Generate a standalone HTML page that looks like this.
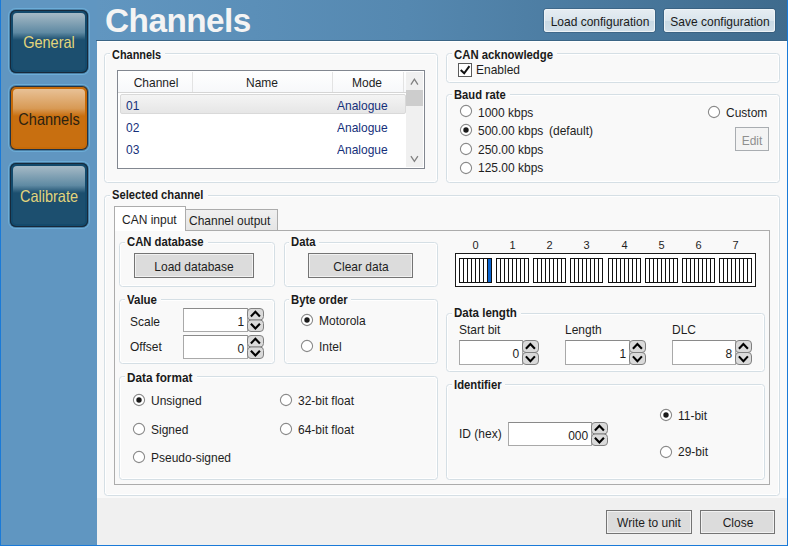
<!DOCTYPE html>
<html><head><meta charset="utf-8"><style>
html,body{margin:0;padding:0;}
body{width:788px;height:546px;position:relative;overflow:hidden;font-family:"Liberation Sans",sans-serif;}
body>div,body div{position:absolute;}
.t{white-space:nowrap;line-height:1;}
</style></head><body>
<div style="left:0px;top:0px;width:788px;height:546px;background:#6096c1"></div>
<div style="left:97px;top:0px;width:690px;height:41px;background:linear-gradient(90deg,#6196c0 0%,#5588b0 45%,#3f6b8d 100%)"></div>
<div style="left:96px;top:40px;width:691px;height:1px;background:#3b6585"></div>
<div style="left:97px;top:41px;width:690px;height:457px;background:#f9f9f9"></div>
<div style="left:97px;top:41px;width:690px;height:1px;background:#ffffff"></div>
<div style="left:97px;top:498px;width:690px;height:47px;background:#f0f0f0"></div>
<div style="left:0px;top:0px;width:1px;height:546px;background:#1a7ad8"></div>
<div style="left:787px;top:0px;width:1px;height:546px;background:#1a7ad8"></div>
<div style="left:0px;top:545px;width:788px;height:1px;background:#1a7ad8"></div>
<div style="left:8px;top:8px;width:82px;height:67px;border-radius:8px;background:#6cadd8"></div>
<div style="left:9px;top:9px;width:80px;height:65px;border-radius:7px;background:#4a7ea3"></div>
<div style="left:10px;top:10px;width:78px;height:63px;border-radius:6px;background:#1c4f6f;box-shadow:inset 0 0 0 1px #17293a, inset 0 0 0 3px #134a6c"></div>
<div style="left:13px;top:13px;width:72px;height:27px;border-radius:4px 4px 0 0;background:linear-gradient(180deg,#a6bac6 0%,#5f8aa3 72%,#1c4f6f 100%)"></div>
<div class="t" style="left:49.2px;width:0;display:flex;justify-content:center;top:34.00px;font-size:16.5px;color:#e3d57c;font-weight:400;transform:scaleX(0.88);transform-origin:center top;">General</div>
<div style="left:8px;top:84px;width:82px;height:68px;border-radius:8px;background:#6cadd8"></div>
<div style="left:9px;top:85px;width:80px;height:66px;border-radius:7px;background:#4a7ea3"></div>
<div style="left:10px;top:86px;width:78px;height:64px;border-radius:6px;background:#c86f10;box-shadow:inset 0 0 0 1px #1f3346, inset 0 0 0 3px #c66a08"></div>
<div style="left:13px;top:89px;width:72px;height:27px;border-radius:4px 4px 0 0;background:linear-gradient(180deg,#e8c196 0%,#d89a55 72%,#c86f10 100%)"></div>
<div class="t" style="left:49.2px;width:0;display:flex;justify-content:center;top:111.00px;font-size:16.5px;color:#2b2210;font-weight:400;transform:scaleX(0.88);transform-origin:center top;">Channels</div>
<div style="left:8px;top:161px;width:82px;height:68px;border-radius:8px;background:#6cadd8"></div>
<div style="left:9px;top:162px;width:80px;height:66px;border-radius:7px;background:#4a7ea3"></div>
<div style="left:10px;top:163px;width:78px;height:64px;border-radius:6px;background:#1c4f6f;box-shadow:inset 0 0 0 1px #17293a, inset 0 0 0 3px #134a6c"></div>
<div style="left:13px;top:166px;width:72px;height:27px;border-radius:4px 4px 0 0;background:linear-gradient(180deg,#a6bac6 0%,#5f8aa3 72%,#1c4f6f 100%)"></div>
<div class="t" style="left:49.2px;width:0;display:flex;justify-content:center;top:188.00px;font-size:16.5px;color:#e3d57c;font-weight:400;transform:scaleX(0.88);transform-origin:center top;">Calibrate</div>
<div class="t" style="left:105px;top:4.00px;font-size:33.3px;color:#f4f4f4;font-weight:700;letter-spacing:-0.5px">Channels</div>
<div style="left:543px;top:8px;width:113px;height:25px;border-radius:4px;background:rgba(40,70,95,0.35)"></div>
<div style="left:544px;top:9px;width:111px;height:23px;border-radius:3px;background:linear-gradient(180deg,#e6edf2 0%,#dae5ed 50%,#c9d9e4 52%,#d3e0e9 100%);box-shadow:inset 0 0 0 1px #eef3f6"></div>
<div class="t" style="left:599.5px;width:0;display:flex;justify-content:center;top:16.00px;font-size:12.7px;color:#1a1a1a;font-weight:400;transform:scaleX(0.945);transform-origin:center top;">Load configuration</div>
<div style="left:663px;top:8px;width:113px;height:25px;border-radius:4px;background:rgba(40,70,95,0.35)"></div>
<div style="left:664px;top:9px;width:111px;height:23px;border-radius:3px;background:linear-gradient(180deg,#e6edf2 0%,#dae5ed 50%,#c9d9e4 52%,#d3e0e9 100%);box-shadow:inset 0 0 0 1px #eef3f6"></div>
<div class="t" style="left:719.5px;width:0;display:flex;justify-content:center;top:16.00px;font-size:12.7px;color:#1a1a1a;font-weight:400;transform:scaleX(0.945);transform-origin:center top;">Save configuration</div>
<div style="left:104px;top:53px;width:334px;height:130px;border-radius:3.5px;border:1px solid #d5dfe5;box-sizing:border-box;box-shadow:inset 0 0 0 1px #ffffff"></div>
<div style="left:110.0px;top:51px;width:55.1491px;height:5px;background:#f9f9f9"></div>
<div class="t" style="left:111.9px;top:49.00px;font-size:12px;color:#1a1a1a;font-weight:700;transform:scaleX(0.91);transform-origin:left top;">Channels</div>
<div style="left:446px;top:53px;width:334px;height:30px;border-radius:3.5px;border:1px solid #d5dfe5;box-sizing:border-box;box-shadow:inset 0 0 0 1px #ffffff"></div>
<div style="left:452.0px;top:51px;width:105.03674px;height:5px;background:#f9f9f9"></div>
<div class="t" style="left:453.9px;top:49.00px;font-size:12px;color:#1a1a1a;font-weight:700;transform:scaleX(0.946);transform-origin:left top;">CAN acknowledge</div>
<div style="left:446px;top:94px;width:334px;height:89px;border-radius:3.5px;border:1px solid #d5dfe5;box-sizing:border-box;box-shadow:inset 0 0 0 1px #ffffff"></div>
<div style="left:452.0px;top:92px;width:57.69690000000001px;height:5px;background:#f9f9f9"></div>
<div class="t" style="left:453.9px;top:89.00px;font-size:12px;color:#1a1a1a;font-weight:700;transform:scaleX(0.934);transform-origin:left top;">Baud rate</div>
<div style="left:104px;top:195px;width:676px;height:301px;border-radius:3.5px;border:1px solid #d5dfe5;box-sizing:border-box;box-shadow:inset 0 0 0 1px #ffffff"></div>
<div style="left:110.2px;top:193px;width:97.37328000000001px;height:5px;background:#f9f9f9"></div>
<div class="t" style="left:112.10000000000001px;top:189.00px;font-size:12px;color:#1a1a1a;font-weight:700;transform:scaleX(0.932);transform-origin:left top;">Selected channel</div>
<div style="left:117px;top:70px;width:308px;height:99px;border:1px solid #828790;box-sizing:border-box;background:#fff"></div>
<div style="left:118px;top:71px;width:288px;height:22px;background:linear-gradient(180deg,#ffffff 0%,#f7f8fa 100%);border-bottom:1px solid #d5d5d5;box-sizing:border-box"></div>
<div style="left:192px;top:72px;width:1px;height:20px;background:#e3e3e3"></div>
<div style="left:332px;top:72px;width:1px;height:20px;background:#e3e3e3"></div>
<div style="left:403px;top:72px;width:1px;height:20px;background:#e3e3e3"></div>
<div class="t" style="left:156px;width:0;display:flex;justify-content:center;top:77.00px;font-size:12.7px;color:#1e1e1e;font-weight:400;transform:scaleX(0.945);transform-origin:center top;">Channel</div>
<div class="t" style="left:262px;width:0;display:flex;justify-content:center;top:77.00px;font-size:12.7px;color:#1e1e1e;font-weight:400;transform:scaleX(0.945);transform-origin:center top;">Name</div>
<div class="t" style="left:367px;width:0;display:flex;justify-content:center;top:77.00px;font-size:12.7px;color:#1e1e1e;font-weight:400;transform:scaleX(0.945);transform-origin:center top;">Mode</div>
<div style="left:120px;top:94px;width:286px;height:20px;border-radius:2px;border:1px solid #d9d9d9;box-sizing:border-box;background:linear-gradient(180deg,#f4f4f4 0%,#e6e6e6 100%)"></div>
<div style="left:118px;top:93px;width:288px;height:75px;overflow:hidden">
<div class="t" style="left:8.3px;top:7.00px;font-size:12.7px;color:#15307a;font-weight:400;transform:scaleX(0.945);transform-origin:left top;">01</div>
<div class="t" style="left:219.3px;top:7.00px;font-size:12.7px;color:#15307a;font-weight:400;transform:scaleX(0.945);transform-origin:left top;">Analogue</div>
<div class="t" style="left:8.3px;top:29.00px;font-size:12.7px;color:#15307a;font-weight:400;transform:scaleX(0.945);transform-origin:left top;">02</div>
<div class="t" style="left:219.3px;top:29.00px;font-size:12.7px;color:#15307a;font-weight:400;transform:scaleX(0.945);transform-origin:left top;">Analogue</div>
<div class="t" style="left:8.3px;top:51.00px;font-size:12.7px;color:#15307a;font-weight:400;transform:scaleX(0.945);transform-origin:left top;">03</div>
<div class="t" style="left:219.3px;top:51.00px;font-size:12.7px;color:#15307a;font-weight:400;transform:scaleX(0.945);transform-origin:left top;">Analogue</div>
<div class="t" style="left:8.3px;top:74.00px;font-size:12.7px;color:#15307a;font-weight:400;transform:scaleX(0.945);transform-origin:left top;">04</div>
<div class="t" style="left:219.3px;top:74.00px;font-size:12.7px;color:#15307a;font-weight:400;transform:scaleX(0.945);transform-origin:left top;">Analogue</div>
</div>
<div style="left:406px;top:72px;width:17px;height:95px;background:#f0f0f0"></div>
<div style="left:406px;top:90px;width:17px;height:16px;background:#cdcdcd"></div>
<svg style="position:absolute;left:406px;top:71px" width="18" height="97"><path d="M4.9 13.6 L8.4 8.2 L11.9 13.6" stroke="#808080" fill="none" stroke-width="1.3"/><path d="M4.9 85.2 L8.4 90.4 L11.9 85.2" stroke="#808080" fill="none" stroke-width="1.3"/></svg>
<div style="left:458px;top:63px;width:14px;height:14px;border:1px solid #5a5a5a;box-sizing:border-box;background:#fff"></div>
<svg style="position:absolute;left:458px;top:63px" width="14" height="14"><path d="M2.7 7 L6.2 10.3 L11.4 3.2" stroke="#111" fill="none" stroke-width="2"/></svg>
<div class="t" style="left:476.3px;top:64.00px;font-size:12.7px;color:#1e1e1e;font-weight:400;transform:scaleX(0.945);transform-origin:left top;">Enabled</div>
<svg style="position:absolute;left:458.10px;top:103.40px" width="16" height="16"><circle cx="8" cy="8" r="5.6" fill="#fff" stroke="#8a8a8a" stroke-width="1.1"/></svg>
<div class="t" style="left:477.8px;top:107.00px;font-size:12.7px;color:#1e1e1e;font-weight:400;transform:scaleX(0.945);transform-origin:left top;">1000 kbps</div>
<svg style="position:absolute;left:458.10px;top:122.30px" width="16" height="16"><circle cx="8" cy="8" r="5.6" fill="#fff" stroke="#8a8a8a" stroke-width="1.1"/><circle cx="8" cy="8" r="2.7" fill="#1a1a1a"/></svg>
<div class="t" style="left:477.8px;top:125.00px;font-size:12.7px;color:#1e1e1e;font-weight:400;transform:scaleX(0.945);transform-origin:left top;">500.00 kbps</div>
<svg style="position:absolute;left:458.10px;top:141.20px" width="16" height="16"><circle cx="8" cy="8" r="5.6" fill="#fff" stroke="#8a8a8a" stroke-width="1.1"/></svg>
<div class="t" style="left:477.8px;top:144.00px;font-size:12.7px;color:#1e1e1e;font-weight:400;transform:scaleX(0.945);transform-origin:left top;">250.00 kbps</div>
<svg style="position:absolute;left:458.10px;top:160.10px" width="16" height="16"><circle cx="8" cy="8" r="5.6" fill="#fff" stroke="#8a8a8a" stroke-width="1.1"/></svg>
<div class="t" style="left:477.8px;top:162.00px;font-size:12.7px;color:#1e1e1e;font-weight:400;transform:scaleX(0.945);transform-origin:left top;">125.00 kbps</div>
<div class="t" style="left:548.9px;top:125.00px;font-size:12.7px;color:#1e1e1e;font-weight:400;transform:scaleX(0.945);transform-origin:left top;">(default)</div>
<svg style="position:absolute;left:705.80px;top:103.60px" width="16" height="16"><circle cx="8" cy="8" r="5.6" fill="#fff" stroke="#8a8a8a" stroke-width="1.1"/></svg>
<div class="t" style="left:725.9px;top:107.00px;font-size:12.7px;color:#1e1e1e;font-weight:400;transform:scaleX(0.945);transform-origin:left top;">Custom</div>
<div style="left:735px;top:127px;width:34px;height:24px;border:1px solid #a9adb1;box-sizing:border-box;background:#f4f4f4"></div>
<div class="t" style="left:752px;width:0;display:flex;justify-content:center;top:135.00px;font-size:12.7px;color:#8f8f8f;font-weight:400;transform:scaleX(0.945);transform-origin:center top;">Edit</div>
<div style="left:114px;top:230px;width:656px;height:255px;border:1px solid #acacac;box-sizing:border-box;background:#f9f9f9"></div>
<div style="left:185px;top:209px;width:93px;height:22px;border:1px solid #acacac;box-sizing:border-box;background:linear-gradient(180deg,#f0f0f0,#e5e5e5)"></div>
<div class="t" style="left:189.3px;top:215.00px;font-size:12.7px;color:#1e1e1e;font-weight:400;transform:scaleX(0.945);transform-origin:left top;">Channel output</div>
<div style="left:114px;top:206px;width:72px;height:25px;border:1px solid #acacac;border-bottom:none;box-sizing:border-box;background:#ffffff"></div>
<div class="t" style="left:121.89999999999999px;top:214.00px;font-size:12.7px;color:#1e1e1e;font-weight:400;transform:scaleX(0.945);transform-origin:left top;">CAN input</div>
<div style="left:119px;top:242px;width:156px;height:45px;border-radius:3.5px;border:1px solid #d5dfe5;box-sizing:border-box;box-shadow:inset 0 0 0 1px #ffffff"></div>
<div style="left:125.2px;top:240px;width:82.55976px;height:5px;background:#f9f9f9"></div>
<div class="t" style="left:127.10000000000001px;top:236.00px;font-size:12px;color:#1a1a1a;font-weight:700;transform:scaleX(0.941);transform-origin:left top;">CAN database</div>
<div style="left:284px;top:242px;width:154px;height:45px;border-radius:3.5px;border:1px solid #d5dfe5;box-sizing:border-box;box-shadow:inset 0 0 0 1px #ffffff"></div>
<div style="left:288.7px;top:240px;width:30.5246px;height:5px;background:#f9f9f9"></div>
<div class="t" style="left:290.59999999999997px;top:236.00px;font-size:12px;color:#1a1a1a;font-weight:700;transform:scaleX(0.94);transform-origin:left top;">Data</div>
<div style="left:119px;top:299px;width:156px;height:65px;border-radius:3.5px;border:1px solid #d5dfe5;box-sizing:border-box;box-shadow:inset 0 0 0 1px #ffffff"></div>
<div style="left:125.0px;top:297px;width:36.00195px;height:5px;background:#f9f9f9"></div>
<div class="t" style="left:126.9px;top:294.00px;font-size:12px;color:#1a1a1a;font-weight:700;transform:scaleX(0.957);transform-origin:left top;">Value</div>
<div style="left:284px;top:299px;width:154px;height:65px;border-radius:3.5px;border:1px solid #d5dfe5;box-sizing:border-box;box-shadow:inset 0 0 0 1px #ffffff"></div>
<div style="left:288.7px;top:297px;width:62.59886px;height:5px;background:#f9f9f9"></div>
<div class="t" style="left:290.59999999999997px;top:294.00px;font-size:12px;color:#1a1a1a;font-weight:700;transform:scaleX(0.943);transform-origin:left top;">Byte order</div>
<div style="left:119px;top:376px;width:319px;height:104px;border-radius:3.5px;border:1px solid #d5dfe5;box-sizing:border-box;box-shadow:inset 0 0 0 1px #ffffff"></div>
<div style="left:125.2px;top:374px;width:71.3464px;height:5px;background:#f9f9f9"></div>
<div class="t" style="left:127.10000000000001px;top:372.00px;font-size:12px;color:#1a1a1a;font-weight:700;transform:scaleX(0.98);transform-origin:left top;">Data format</div>
<div style="left:446px;top:313px;width:319px;height:59px;border-radius:3.5px;border:1px solid #d5dfe5;box-sizing:border-box;box-shadow:inset 0 0 0 1px #ffffff"></div>
<div style="left:452.4px;top:311px;width:68.79174px;height:5px;background:#f9f9f9"></div>
<div class="t" style="left:454.29999999999995px;top:307.00px;font-size:12px;color:#1a1a1a;font-weight:700;transform:scaleX(0.961);transform-origin:left top;">Data length</div>
<div style="left:446px;top:384px;width:319px;height:96px;border-radius:3.5px;border:1px solid #d5dfe5;box-sizing:border-box;box-shadow:inset 0 0 0 1px #ffffff"></div>
<div style="left:451.7px;top:382px;width:53.629799999999996px;height:5px;background:#f9f9f9"></div>
<div class="t" style="left:453.59999999999997px;top:379.00px;font-size:12px;color:#1a1a1a;font-weight:700;transform:scaleX(0.94);transform-origin:left top;">Identifier</div>
<div style="left:134px;top:253px;width:120px;height:25px;border:1px solid #747474;box-sizing:border-box;background:#dcdcdc;box-shadow:inset 0 0 0 1px #f1f1f1"></div>
<div class="t" style="left:194.0px;width:0;display:flex;justify-content:center;top:261.00px;font-size:12.7px;color:#1e1e1e;font-weight:400;transform:scaleX(0.945);transform-origin:center top;">Load database</div>
<div style="left:308px;top:253px;width:105px;height:25px;border:1px solid #747474;box-sizing:border-box;background:#dcdcdc;box-shadow:inset 0 0 0 1px #f1f1f1"></div>
<div class="t" style="left:360.5px;width:0;display:flex;justify-content:center;top:261.00px;font-size:12.7px;color:#1e1e1e;font-weight:400;transform:scaleX(0.945);transform-origin:center top;">Clear data</div>
<div style="left:455px;top:253px;width:301px;height:34px;border:1px solid #1a1a1a;box-sizing:border-box;background:#fff"></div>
<div style="left:459px;top:258px;width:33px;height:25px;border-top:1px solid #111;border-bottom:1px solid #111;box-sizing:border-box;background:repeating-linear-gradient(90deg,#111 0px,#111 1px,#fff 1px,#fff 4px)"></div>
<div class="t" style="left:475.5px;width:0;display:flex;justify-content:center;top:240.00px;font-size:11px;color:#1e1e1e;font-weight:400;">0</div>
<div style="left:496px;top:258px;width:33px;height:25px;border-top:1px solid #111;border-bottom:1px solid #111;box-sizing:border-box;background:repeating-linear-gradient(90deg,#111 0px,#111 1px,#fff 1px,#fff 4px)"></div>
<div class="t" style="left:512.5px;width:0;display:flex;justify-content:center;top:240.00px;font-size:11px;color:#1e1e1e;font-weight:400;">1</div>
<div style="left:533px;top:258px;width:33px;height:25px;border-top:1px solid #111;border-bottom:1px solid #111;box-sizing:border-box;background:repeating-linear-gradient(90deg,#111 0px,#111 1px,#fff 1px,#fff 4px)"></div>
<div class="t" style="left:549.5px;width:0;display:flex;justify-content:center;top:240.00px;font-size:11px;color:#1e1e1e;font-weight:400;">2</div>
<div style="left:570px;top:258px;width:33px;height:25px;border-top:1px solid #111;border-bottom:1px solid #111;box-sizing:border-box;background:repeating-linear-gradient(90deg,#111 0px,#111 1px,#fff 1px,#fff 4px)"></div>
<div class="t" style="left:586.5px;width:0;display:flex;justify-content:center;top:240.00px;font-size:11px;color:#1e1e1e;font-weight:400;">3</div>
<div style="left:608px;top:258px;width:33px;height:25px;border-top:1px solid #111;border-bottom:1px solid #111;box-sizing:border-box;background:repeating-linear-gradient(90deg,#111 0px,#111 1px,#fff 1px,#fff 4px)"></div>
<div class="t" style="left:624.5px;width:0;display:flex;justify-content:center;top:240.00px;font-size:11px;color:#1e1e1e;font-weight:400;">4</div>
<div style="left:645px;top:258px;width:33px;height:25px;border-top:1px solid #111;border-bottom:1px solid #111;box-sizing:border-box;background:repeating-linear-gradient(90deg,#111 0px,#111 1px,#fff 1px,#fff 4px)"></div>
<div class="t" style="left:661.5px;width:0;display:flex;justify-content:center;top:240.00px;font-size:11px;color:#1e1e1e;font-weight:400;">5</div>
<div style="left:682px;top:258px;width:33px;height:25px;border-top:1px solid #111;border-bottom:1px solid #111;box-sizing:border-box;background:repeating-linear-gradient(90deg,#111 0px,#111 1px,#fff 1px,#fff 4px)"></div>
<div class="t" style="left:698.5px;width:0;display:flex;justify-content:center;top:240.00px;font-size:11px;color:#1e1e1e;font-weight:400;">6</div>
<div style="left:719px;top:258px;width:33px;height:25px;border-top:1px solid #111;border-bottom:1px solid #111;box-sizing:border-box;background:repeating-linear-gradient(90deg,#111 0px,#111 1px,#fff 1px,#fff 4px)"></div>
<div class="t" style="left:735.5px;width:0;display:flex;justify-content:center;top:240.00px;font-size:11px;color:#1e1e1e;font-weight:400;">7</div>
<div style="left:488px;top:259px;width:3px;height:23px;background:#0a64d0"></div>
<div class="t" style="left:129.60000000000002px;top:316.00px;font-size:12.7px;color:#1e1e1e;font-weight:400;transform:scaleX(0.945);transform-origin:left top;">Scale</div>
<div class="t" style="left:129.60000000000002px;top:341.00px;font-size:12.7px;color:#1e1e1e;font-weight:400;transform:scaleX(0.945);transform-origin:left top;">Offset</div>
<div style="left:183px;top:308px;width:65px;height:24px;border:1px solid #a9a9a9;border-top-color:#8a8a8a;box-sizing:border-box;background:#fff"></div>
<div class="t" style="right:544px;top:316.00px;font-size:12.7px;color:#1e1e1e;font-weight:400;transform:scaleX(0.945);transform-origin:right top;">1</div>
<svg style="position:absolute;left:246.5px;top:308px" width="17" height="24"><rect x="0.5" y="0.5" width="16" height="11.5" rx="3.5" fill="#dadada" stroke="#808080"/><rect x="0.5" y="12.0" width="16" height="11.5" rx="3.5" fill="#dadada" stroke="#808080"/><path d="M3.9 8.5 L8.4 3.7 L12.9 8.5" stroke="#000" stroke-width="2.1" fill="none"/><path d="M3.9 15.7 L8.4 20.5 L12.9 15.7" stroke="#000" stroke-width="2.1" fill="none"/></svg>
<div style="left:183px;top:335px;width:65px;height:24px;border:1px solid #a9a9a9;border-top-color:#8a8a8a;box-sizing:border-box;background:#fff"></div>
<div class="t" style="right:544px;top:343.00px;font-size:12.7px;color:#1e1e1e;font-weight:400;transform:scaleX(0.945);transform-origin:right top;">0</div>
<svg style="position:absolute;left:246.5px;top:335px" width="17" height="24"><rect x="0.5" y="0.5" width="16" height="11.5" rx="3.5" fill="#dadada" stroke="#808080"/><rect x="0.5" y="12.0" width="16" height="11.5" rx="3.5" fill="#dadada" stroke="#808080"/><path d="M3.9 8.5 L8.4 3.7 L12.9 8.5" stroke="#000" stroke-width="2.1" fill="none"/><path d="M3.9 15.7 L8.4 20.5 L12.9 15.7" stroke="#000" stroke-width="2.1" fill="none"/></svg>
<svg style="position:absolute;left:298.90px;top:311.50px" width="16" height="16"><circle cx="8" cy="8" r="5.6" fill="#fff" stroke="#8a8a8a" stroke-width="1.1"/><circle cx="8" cy="8" r="2.7" fill="#1a1a1a"/></svg>
<div class="t" style="left:318.5px;top:315.00px;font-size:12.7px;color:#1e1e1e;font-weight:400;transform:scaleX(0.945);transform-origin:left top;">Motorola</div>
<svg style="position:absolute;left:298.90px;top:338.10px" width="16" height="16"><circle cx="8" cy="8" r="5.6" fill="#fff" stroke="#8a8a8a" stroke-width="1.1"/></svg>
<div class="t" style="left:318.5px;top:341.00px;font-size:12.7px;color:#1e1e1e;font-weight:400;transform:scaleX(0.945);transform-origin:left top;">Intel</div>
<div class="t" style="left:458.8px;top:324.00px;font-size:12.7px;color:#1e1e1e;font-weight:400;transform:scaleX(0.945);transform-origin:left top;">Start bit</div>
<div class="t" style="left:565.3px;top:324.00px;font-size:12.7px;color:#1e1e1e;font-weight:400;transform:scaleX(0.945);transform-origin:left top;">Length</div>
<div class="t" style="left:671.8px;top:324.00px;font-size:12.7px;color:#1e1e1e;font-weight:400;transform:scaleX(0.945);transform-origin:left top;">DLC</div>
<div style="left:459px;top:340px;width:64px;height:25px;border:1px solid #a9a9a9;border-top-color:#8a8a8a;box-sizing:border-box;background:#fff"></div>
<div class="t" style="right:269px;top:348.00px;font-size:12.7px;color:#1e1e1e;font-weight:400;transform:scaleX(0.945);transform-origin:right top;">0</div>
<svg style="position:absolute;left:521.5px;top:340px" width="17" height="25"><rect x="0.5" y="0.5" width="16" height="12.0" rx="3.5" fill="#dadada" stroke="#808080"/><rect x="0.5" y="12.5" width="16" height="12.0" rx="3.5" fill="#dadada" stroke="#808080"/><path d="M3.9 8.8 L8.4 4.0 L12.9 8.8" stroke="#000" stroke-width="2.1" fill="none"/><path d="M3.9 16.4 L8.4 21.2 L12.9 16.4" stroke="#000" stroke-width="2.1" fill="none"/></svg>
<div style="left:565px;top:340px;width:65px;height:25px;border:1px solid #a9a9a9;border-top-color:#8a8a8a;box-sizing:border-box;background:#fff"></div>
<div class="t" style="right:162px;top:348.00px;font-size:12.7px;color:#1e1e1e;font-weight:400;transform:scaleX(0.945);transform-origin:right top;">1</div>
<svg style="position:absolute;left:628.5px;top:340px" width="17" height="25"><rect x="0.5" y="0.5" width="16" height="12.0" rx="3.5" fill="#dadada" stroke="#808080"/><rect x="0.5" y="12.5" width="16" height="12.0" rx="3.5" fill="#dadada" stroke="#808080"/><path d="M3.9 8.8 L8.4 4.0 L12.9 8.8" stroke="#000" stroke-width="2.1" fill="none"/><path d="M3.9 16.4 L8.4 21.2 L12.9 16.4" stroke="#000" stroke-width="2.1" fill="none"/></svg>
<div style="left:672px;top:340px;width:64px;height:25px;border:1px solid #a9a9a9;border-top-color:#8a8a8a;box-sizing:border-box;background:#fff"></div>
<div class="t" style="right:56px;top:348.00px;font-size:12.7px;color:#1e1e1e;font-weight:400;transform:scaleX(0.945);transform-origin:right top;">8</div>
<svg style="position:absolute;left:734.5px;top:340px" width="17" height="25"><rect x="0.5" y="0.5" width="16" height="12.0" rx="3.5" fill="#dadada" stroke="#808080"/><rect x="0.5" y="12.5" width="16" height="12.0" rx="3.5" fill="#dadada" stroke="#808080"/><path d="M3.9 8.8 L8.4 4.0 L12.9 8.8" stroke="#000" stroke-width="2.1" fill="none"/><path d="M3.9 16.4 L8.4 21.2 L12.9 16.4" stroke="#000" stroke-width="2.1" fill="none"/></svg>
<svg style="position:absolute;left:131.30px;top:392.40px" width="16" height="16"><circle cx="8" cy="8" r="5.6" fill="#fff" stroke="#8a8a8a" stroke-width="1.1"/><circle cx="8" cy="8" r="2.7" fill="#1a1a1a"/></svg>
<div class="t" style="left:150.8px;top:395.00px;font-size:12.7px;color:#1e1e1e;font-weight:400;transform:scaleX(0.945);transform-origin:left top;">Unsigned</div>
<svg style="position:absolute;left:131.30px;top:421.20px" width="16" height="16"><circle cx="8" cy="8" r="5.6" fill="#fff" stroke="#8a8a8a" stroke-width="1.1"/></svg>
<div class="t" style="left:150.8px;top:424.00px;font-size:12.7px;color:#1e1e1e;font-weight:400;transform:scaleX(0.945);transform-origin:left top;">Signed</div>
<svg style="position:absolute;left:131.30px;top:449.00px" width="16" height="16"><circle cx="8" cy="8" r="5.6" fill="#fff" stroke="#8a8a8a" stroke-width="1.1"/></svg>
<div class="t" style="left:150.8px;top:452.00px;font-size:12.7px;color:#1e1e1e;font-weight:400;transform:scaleX(0.945);transform-origin:left top;">Pseudo-signed</div>
<svg style="position:absolute;left:278.30px;top:392.20px" width="16" height="16"><circle cx="8" cy="8" r="5.6" fill="#fff" stroke="#8a8a8a" stroke-width="1.1"/></svg>
<div class="t" style="left:297.8px;top:395.00px;font-size:12.7px;color:#1e1e1e;font-weight:400;transform:scaleX(0.945);transform-origin:left top;">32-bit float</div>
<svg style="position:absolute;left:278.30px;top:420.80px" width="16" height="16"><circle cx="8" cy="8" r="5.6" fill="#fff" stroke="#8a8a8a" stroke-width="1.1"/></svg>
<div class="t" style="left:297.8px;top:424.00px;font-size:12.7px;color:#1e1e1e;font-weight:400;transform:scaleX(0.945);transform-origin:left top;">64-bit float</div>
<div class="t" style="left:458.7px;top:428.00px;font-size:12.7px;color:#1e1e1e;font-weight:400;transform:scaleX(0.945);transform-origin:left top;">ID (hex)</div>
<div style="left:508px;top:422px;width:84px;height:24px;border:1px solid #a9a9a9;border-top-color:#8a8a8a;box-sizing:border-box;background:#fff"></div>
<div class="t" style="right:200px;top:430.00px;font-size:12.7px;color:#1e1e1e;font-weight:400;transform:scaleX(0.945);transform-origin:right top;">000</div>
<svg style="position:absolute;left:590.5px;top:422px" width="17" height="24"><rect x="0.5" y="0.5" width="16" height="11.5" rx="3.5" fill="#dadada" stroke="#808080"/><rect x="0.5" y="12.0" width="16" height="11.5" rx="3.5" fill="#dadada" stroke="#808080"/><path d="M3.9 8.5 L8.4 3.7 L12.9 8.5" stroke="#000" stroke-width="2.1" fill="none"/><path d="M3.9 15.7 L8.4 20.5 L12.9 15.7" stroke="#000" stroke-width="2.1" fill="none"/></svg>
<svg style="position:absolute;left:657.80px;top:407.20px" width="16" height="16"><circle cx="8" cy="8" r="5.6" fill="#fff" stroke="#8a8a8a" stroke-width="1.1"/><circle cx="8" cy="8" r="2.7" fill="#1a1a1a"/></svg>
<div class="t" style="left:677.5999999999999px;top:410.00px;font-size:12.7px;color:#1e1e1e;font-weight:400;transform:scaleX(0.945);transform-origin:left top;">11-bit</div>
<svg style="position:absolute;left:657.80px;top:443.50px" width="16" height="16"><circle cx="8" cy="8" r="5.6" fill="#fff" stroke="#8a8a8a" stroke-width="1.1"/></svg>
<div class="t" style="left:677.5999999999999px;top:446.00px;font-size:12.7px;color:#1e1e1e;font-weight:400;transform:scaleX(0.945);transform-origin:left top;">29-bit</div>
<div style="left:606px;top:510px;width:86px;height:24px;border:1px solid #747474;box-sizing:border-box;background:#dcdcdc;box-shadow:inset 0 0 0 1px #f1f1f1"></div>
<div class="t" style="left:649.0px;width:0;display:flex;justify-content:center;top:517.00px;font-size:12.7px;color:#1e1e1e;font-weight:400;transform:scaleX(0.945);transform-origin:center top;">Write to unit</div>
<div style="left:700px;top:510px;width:75px;height:24px;border:1px solid #747474;box-sizing:border-box;background:#dcdcdc;box-shadow:inset 0 0 0 1px #f1f1f1"></div>
<div class="t" style="left:737.5px;width:0;display:flex;justify-content:center;top:517.00px;font-size:12.7px;color:#1e1e1e;font-weight:400;transform:scaleX(0.945);transform-origin:center top;">Close</div>
</body></html>
